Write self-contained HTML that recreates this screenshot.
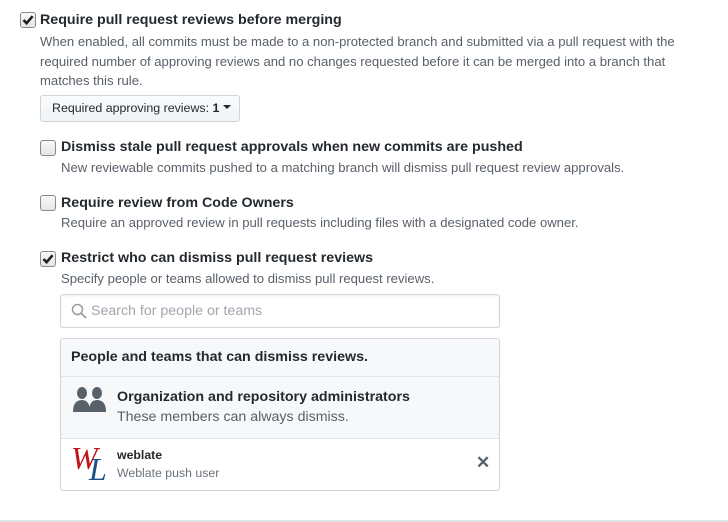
<!DOCTYPE html>
<html><head><style>
body{margin:0;width:728px;height:522px;background:#fff;font-family:"Liberation Sans",sans-serif;color:#24292e;position:relative;overflow:hidden}
.a{position:absolute;white-space:nowrap}
.cb{position:absolute;width:14px;height:14px;border:1px solid #8a8a8a;border-radius:3px;background:linear-gradient(#fafafa,#e4e4e4)}
.t{font-size:14.25px;font-weight:bold}
.d{font-size:13.1px;color:#586069}
</style></head><body>
<div class="cb" style="left:20px;top:12px"><svg width="14" height="14" viewBox="0 0 14 14"><path d="M2.5 7L5.6 10.2 11.6 3.2" stroke="#222" stroke-width="2.6" fill="none"/></svg></div>
<div class="a t" style="left:40px;top:12px">Require pull request reviews before merging</div>
<div class="a d" style="left:40px;top:32px;line-height:19.5px">When enabled, all commits must be made to a non-protected branch and submitted via a pull request with the<br>required number of approving reviews and no changes requested before it can be merged into a branch that<br>matches this rule.</div>
<div class="a" style="left:40px;top:95px;width:198px;height:25px;border:1px solid #d1d5da;border-radius:3px;background:linear-gradient(#fafbfc,#eff3f6);font-size:12.4px;line-height:25px;color:#24292e"><span style="margin-left:11px">Required approving reviews: <b>1</b></span><span style="display:inline-block;margin-left:4px;border:4px solid transparent;border-top-color:#24292e;vertical-align:-1px"></span></div>

<div class="cb" style="left:40px;top:140px"></div>
<div class="a t" style="left:61px;top:139px">Dismiss stale pull request approvals when new commits are pushed</div>
<div class="a d" style="left:61px;top:160px">New reviewable commits pushed to a matching branch will dismiss pull request review approvals.</div>

<div class="cb" style="left:40px;top:195px"></div>
<div class="a t" style="left:61px;top:195px">Require review from Code Owners</div>
<div class="a d" style="left:61px;top:215px">Require an approved review in pull requests including files with a designated code owner.</div>

<div class="cb" style="left:40px;top:251px"><svg width="14" height="14" viewBox="0 0 14 14"><path d="M2.5 7L5.6 10.2 11.6 3.2" stroke="#222" stroke-width="2.6" fill="none"/></svg></div>
<div class="a t" style="left:61px;top:250px">Restrict who can dismiss pull request reviews</div>
<div class="a d" style="left:61px;top:271px">Specify people or teams allowed to dismiss pull request reviews.</div>

<div class="a" style="left:60px;top:294px;width:438px;height:32px;border:1px solid #d1d5da;border-radius:3px;box-shadow:inset 0 1px 2px rgba(27,31,35,.075)">
<svg class="a" style="left:10px;top:8px" width="16" height="16" viewBox="0 0 16 16"><circle cx="6.5" cy="6.5" r="5" stroke="#959da5" stroke-width="1.5" fill="none"/><path d="M10 10l5 5" stroke="#959da5" stroke-width="1.8"/></svg>
<div class="a" style="left:30px;top:8px;font-size:14.2px;color:#a0a6ad">Search for people or teams</div></div>

<div class="a" style="left:60px;top:338px;width:438px;height:151px;border:1px solid #d1d5da;border-radius:3px;overflow:hidden">
<div class="a" style="left:0;top:0;width:438px;height:37px;background:#f6f8fa;border-bottom:1px solid #e1e4e8"><div class="a t" style="left:10px;top:10px">People and teams that can dismiss reviews.</div></div>
<div class="a" style="left:0;top:38px;width:438px;height:61px;background:#f6f8fa;border-bottom:1px solid #e1e4e8">
<svg class="a" style="left:12px;top:10px" width="34" height="26" viewBox="0 0 34 26"><ellipse cx="9" cy="6" rx="5" ry="6" fill="#586069"/><ellipse cx="24" cy="6" rx="5" ry="6" fill="#586069"/><path d="M0 25Q0 13 9 13Q17 13 17 25Z" fill="#586069"/><path d="M16 25Q16 13 24 13Q33 13 33 25Z" fill="#586069"/></svg>
<div class="a t" style="left:56px;top:12px">Organization and repository administrators</div>
<div class="a" style="left:56px;top:32px;font-size:14.2px;color:#586069">These members can always dismiss.</div></div>
<div class="a" style="left:10px;top:101px;font-family:'Liberation Serif',serif;font-style:italic;font-size:32px;color:#c0161b">W</div>
<div class="a" style="left:28px;top:112px;font-family:'Liberation Serif',serif;font-style:italic;font-size:32px;color:#1b4f8c">L</div>
<div class="a" style="left:56px;top:109px;font-size:12.3px;font-weight:bold">weblate</div>
<div class="a" style="left:56px;top:127px;font-size:12.3px;color:#6a737d">Weblate push user</div>
<div class="a" style="left:415px;top:114px;font-size:17px;font-weight:bold;color:#586069">✕</div>
</div>
<div class="a" style="left:0;top:520px;width:728px;height:2px;background:#e1e4e8"></div>
</body></html>
